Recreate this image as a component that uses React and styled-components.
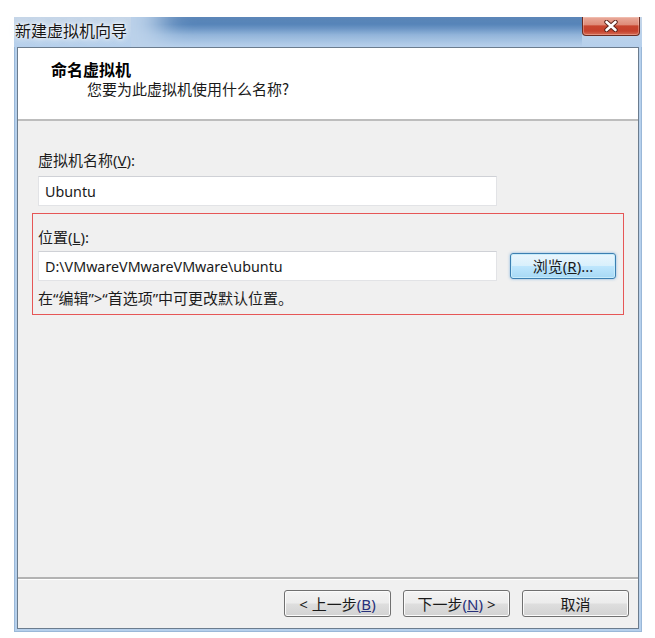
import React from "react";
import styled, { createGlobalStyle } from "styled-components";

const GlobalStyle = createGlobalStyle`
  html, body {
    margin: 0;
    padding: 0;
    background: #ffffff;
  }
  body {
    font-family: "Noto Sans", "Noto Sans CJK SC", sans-serif;
    color: #1a1a1a;
  }
`;

const Page = styled.div`
  padding: 17px 0 0 14px;
`;

const Window = styled.div`
  width: 628px;
  height: 615px;
  box-sizing: border-box;
  display: flex;
  flex-direction: column;
  background: #b6d0ec;
  box-shadow: inset 1px 0 0 #9ab8d8, inset -1px 0 0 #9ab8d8, inset 0 -1px 0 #9ab8d8;
`;

const TitleBar = styled.div`
  height: 30px;
  flex: none;
  display: flex;
  justify-content: space-between;
  align-items: flex-start;
  padding: 0 2px 0 1px;
  background: linear-gradient(to bottom, #c6d6e8 0%, #bcd2ea 50%, #b6d0ec 100%);
`;

const TitleGlow = styled.div`
  flex: 1;
  align-self: stretch;
  height: 30px;
  background-color: #b6d0ec;
  background-image: linear-gradient(to bottom, #3d6ea8 0%, #4a7bb3 25%, #8fb2d8 60%, #b6d0ec 100%);
  box-shadow: inset 40px 0 30px -10px #bcd2ea;
  border-top-right-radius: 0;
`;

const Caption = styled.span`
  font-family: "Noto Sans CJK SC", sans-serif;
  font-size: 16px;
  line-height: 26px;
  color: #161616;
  padding-right: 4px;
  text-shadow: 0 0 6px rgba(255, 255, 255, 0.95), 0 0 3px rgba(255, 255, 255, 0.95), 0 0 10px rgba(230, 240, 250, 0.9);
`;

const CloseButton = styled.div`
  width: 58px;
  height: 19px;
  flex: none;
  box-sizing: border-box;
  display: flex;
  align-items: center;
  justify-content: center;
  border: 1px solid #6a2c22;
  border-top: none;
  border-radius: 0 0 4px 4px;
  background: linear-gradient(to bottom, #e9ab9c 0%, #df8c79 42%, #c8452f 50%, #c5412c 78%, #d66d56 100%);
  box-shadow: inset 0 0 0 1px rgba(255, 220, 210, 0.35);
`;

const Client = styled.div`
  flex: 1;
  margin: 0 3px 3px 3px;
  border: 1px solid #6b7c8e;
  display: flex;
  flex-direction: column;
  background: #f0f0f0;
`;

const Header = styled.div`
  height: 73px;
  flex: none;
  box-sizing: border-box;
  background: #ffffff;
  border-bottom: 2px solid #bdbdbd;
  padding: 12px 0 0 33px;
  font-family: "Noto Sans CJK SC", sans-serif;
`;

const HeaderTitle = styled.div`
  font-size: 16px;
  font-weight: 700;
  line-height: 19px;
  color: #000;
`;

const HeaderSub = styled.div`
  font-size: 15px;
  line-height: 19px;
  padding-left: 36px;
  color: #1a1a1a;
`;

const Body = styled.div`
  flex: 1;
  padding: 29px 0 0 20px;
`;

const Label = styled.div`
  font-size: 15px;
  line-height: 20px;
  color: #1c1c1c;
  margin-bottom: ${(p) => p.$gap || 6}px;
`;

const TextBox = styled.input`
  width: 459px;
  height: 30px;
  box-sizing: border-box;
  border: 1px solid #e2e3e6;
  border-top-color: #cfd1d6;
  background: #ffffff;
  padding: 0 0 0 6px;
  margin: 0;
  font-family: "Noto Sans", "Noto Sans CJK SC", sans-serif;
  font-size: 14.3px;
  color: #1a1a1a;
  outline: none;
`;

const Highlight = styled.div`
  width: 592px;
  box-sizing: border-box;
  margin: 7px 0 0 -6px;
  border: 1px solid #e65656;
  padding: 13px 0 6px 5px;
`;

const PathRow = styled.div`
  display: flex;
  align-items: center;
  gap: 13px;
`;

const Button = styled.button`
  width: ${(p) => p.$w || 107}px;
  height: ${(p) => p.$h || 27}px;
  box-sizing: border-box;
  margin: 0;
  padding: 0;
  border: 1px solid #707070;
  border-radius: 3px;
  background: linear-gradient(to bottom, #f3f3f3 0%, #ececec 48%, #dedede 52%, #d2d2d2 100%);
  box-shadow: inset 0 0 0 1px #fbfbfb;
  font-family: "Noto Sans", "Noto Sans CJK SC", sans-serif;
  font-size: 15px;
  line-height: 20px;
  color: #1a1a1a;
  text-align: center;
  white-space: nowrap;
`;

const BrowseButton = styled(Button)`
  border-color: #3c7fb1;
  background: linear-gradient(to bottom, #eaf6fd 0%, #d9f0fc 48%, #bee6fd 52%, #a7d9f5 100%);
  box-shadow: inset 0 0 0 1px #c8ecfb, 0 0 3px rgba(60, 140, 210, 0.6);
`;

const Mn = styled.span`
  color: ${(p) => (p.$blue ? "#27307a" : "inherit")};
`;

const Note = styled.div`
  font-family: "Noto Sans", "Noto Sans CJK SC", sans-serif;
  font-size: 15px;
  line-height: 20px;
  margin-top: 7px;
  color: #1c1c1c;
`;

const Footer = styled.div`
  height: 51px;
  flex: none;
  box-sizing: border-box;
  border-top: 2px solid #b3b3b3;
  box-shadow: inset 0 1px 0 #ffffff;
  padding: 11px 9px 0 0;
  display: flex;
  justify-content: flex-end;
  align-items: flex-start;
  gap: 12px;
`;

function CloseGlyph() {
  return (
    <svg width="16" height="12" viewBox="0 0 16 12">
      <path d="M3.5 2 L12.5 10 M12.5 2 L3.5 10" stroke="#5a2219" strokeWidth="4.4" strokeLinecap="round" />
      <path d="M3.5 2 L12.5 10 M12.5 2 L3.5 10" stroke="#ffffff" strokeWidth="2.6" strokeLinecap="round" />
    </svg>
  );
}

export default function App() {
  return (
    <>
      <GlobalStyle />
      <Page>
        <Window>
          <TitleBar>
            <Caption>新建虚拟机向导</Caption>
            <TitleGlow />
            <CloseButton>
              <CloseGlyph />
            </CloseButton>
          </TitleBar>
          <Client>
            <Header>
              <HeaderTitle>命名虚拟机</HeaderTitle>
              <HeaderSub>您要为此虚拟机使用什么名称?</HeaderSub>
            </Header>
            <Body>
              <Label>
                虚拟机名称(<u>V</u>):
              </Label>
              <TextBox readOnly value="Ubuntu" />
              <Highlight>
                <Label $gap={4}>
                  位置(<u>L</u>):
                </Label>
                <PathRow>
                  <TextBox readOnly value="D:\VMwareVMwareVMware\ubuntu" />
                  <BrowseButton $w={106} $h={26}>
                    浏览(<u>R</u>)...
                  </BrowseButton>
                </PathRow>
                <Note>在“编辑”&gt;“首选项”中可更改默认位置。</Note>
              </Highlight>
            </Body>
            <Footer>
              <Button>
                &lt; 上一步<Mn $blue>(<u>B</u>)</Mn>
              </Button>
              <Button>
                下一步<Mn $blue>(<u>N</u>)</Mn> &gt;
              </Button>
              <Button>取消</Button>
            </Footer>
          </Client>
        </Window>
      </Page>
    </>
  );
}
